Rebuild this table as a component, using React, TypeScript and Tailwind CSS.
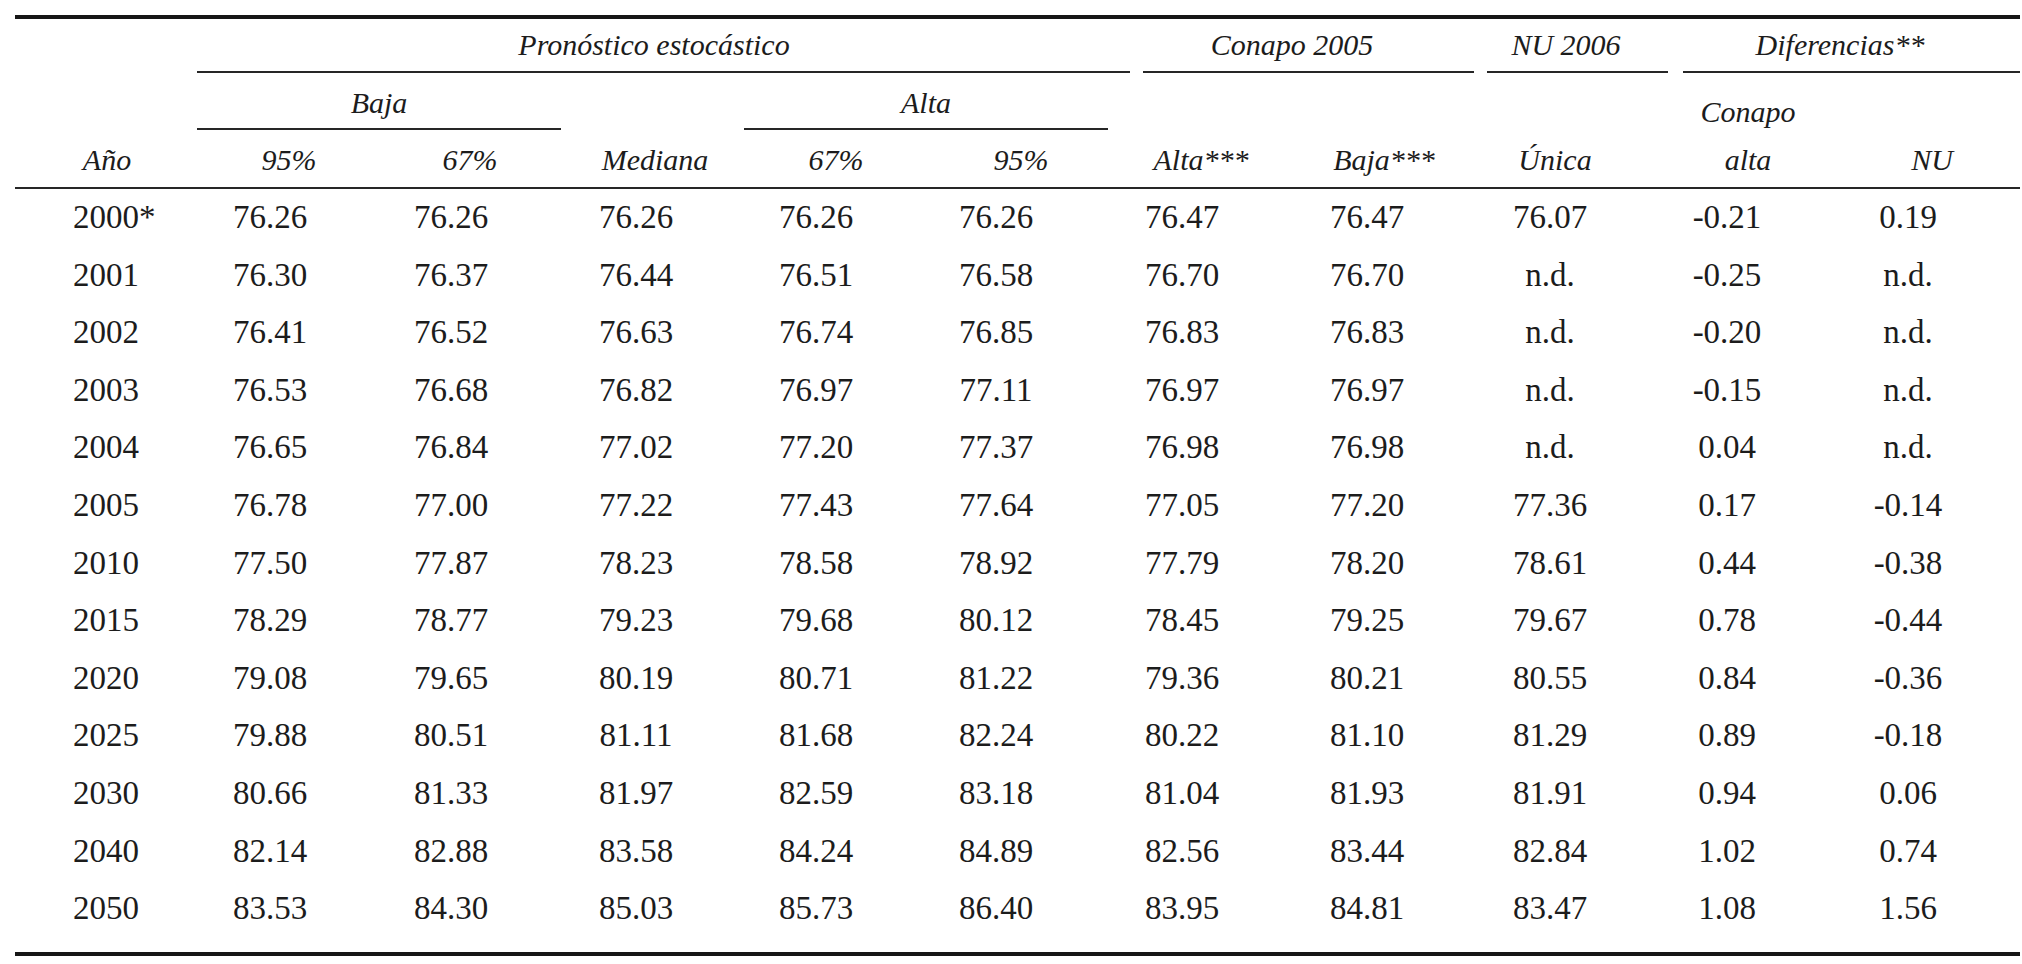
const rows: string[][] = [
  ["2000*", "76.26", "76.26", "76.26", "76.26", "76.26", "76.47", "76.47", "76.07", "-0.21", "0.19"],
  ["2001", "76.30", "76.37", "76.44", "76.51", "76.58", "76.70", "76.70", "n.d.", "-0.25", "n.d."],
  ["2002", "76.41", "76.52", "76.63", "76.74", "76.85", "76.83", "76.83", "n.d.", "-0.20", "n.d."],
  ["2003", "76.53", "76.68", "76.82", "76.97", "77.11", "76.97", "76.97", "n.d.", "-0.15", "n.d."],
  ["2004", "76.65", "76.84", "77.02", "77.20", "77.37", "76.98", "76.98", "n.d.", "0.04", "n.d."],
  ["2005", "76.78", "77.00", "77.22", "77.43", "77.64", "77.05", "77.20", "77.36", "0.17", "-0.14"],
  ["2010", "77.50", "77.87", "78.23", "78.58", "78.92", "77.79", "78.20", "78.61", "0.44", "-0.38"],
  ["2015", "78.29", "78.77", "79.23", "79.68", "80.12", "78.45", "79.25", "79.67", "0.78", "-0.44"],
  ["2020", "79.08", "79.65", "80.19", "80.71", "81.22", "79.36", "80.21", "80.55", "0.84", "-0.36"],
  ["2025", "79.88", "80.51", "81.11", "81.68", "82.24", "80.22", "81.10", "81.29", "0.89", "-0.18"],
  ["2030", "80.66", "81.33", "81.97", "82.59", "83.18", "81.04", "81.93", "81.91", "0.94", "0.06"],
  ["2040", "82.14", "82.88", "83.58", "84.24", "84.89", "82.56", "83.44", "82.84", "1.02", "0.74"],
  ["2050", "83.53", "84.30", "85.03", "85.73", "86.40", "83.95", "84.81", "83.47", "1.08", "1.56"],
];

// column labels of the last header row, with the shift each one needs
const heads = [
  { label: "Año", pad: "pl-[19px]" },
  { label: "95%", pad: "pl-[38px]" },
  { label: "67%", pad: "pl-[38px]" },
  { label: "Mediana", pad: "pl-[38px]" },
  { label: "67%", pad: "pl-[40px]" },
  { label: "95%", pad: "pl-[50px]" },
  { label: "Alta***", pad: "pl-[38px]" },
  { label: "Baja***", pad: "pl-[34px]" },
  { label: "Única", pad: "pl-[10px]" },
  { label: "alta", pad: "pl-[42px]" },
  { label: "NU", pad: "pl-[30px]" },
];

const cols =
  "grid grid-cols-[165px_180px_182px_188px_172px_188px_184px_186px_180px_174px_1fr]";

const dataCell = (i: number) => {
  if (i === 0) return "text-left pl-[58px]";
  if (i === 10) return "text-center pr-[18px]";
  return "text-center";
};

export default function App() {
  return (
    <div className="min-h-[964px] w-[2022px] bg-white font-serif text-[#1c1c1c]">
      <div className="ml-[15px] mr-[2px] pt-[15px] [font-family:Liberation_Serif]">
        <div className="h-[4px] bg-[#161616]" />

        {/* group headings */}
        <div className="flex text-[30px] italic leading-[30px]">
          <div className="w-[182px]" />
          <div className="w-[933px] border-b-2 border-[#262626] pt-[11px] pb-[11px] pr-[19px] text-center">
            Pronóstico estocástico
          </div>
          <div className="ml-[13px] w-[331px] border-b-2 border-[#262626] pt-[11px] pb-[11px] pr-[33px] text-center">
            Conapo 2005
          </div>
          <div className="ml-[13px] w-[181px] border-b-2 border-[#262626] pt-[11px] pb-[11px] pr-[23px] text-center">
            NU 2006
          </div>
          <div className="ml-[15px] flex-1 border-b-2 border-[#262626] pt-[11px] pb-[11px] pr-[23px] text-center">
            Diferencias**
          </div>
        </div>

        {/* sub headings */}
        <div className="flex items-start text-[30px] italic leading-[30px]">
          <div className="ml-[182px] w-[364px] border-b-2 border-[#262626] pt-[15px] pb-[10px] text-center">
            Baja
          </div>
          <div className="ml-[183px] w-[364px] border-b-2 border-[#262626] pt-[15px] pb-[10px] text-center">
            Alta
          </div>
          <div className="ml-[532px] w-[174px] pt-[24px] pl-[42px] text-center">
            Conapo
          </div>
        </div>

        <div className={`${cols} border-b-2 border-[#262626] text-[30px] italic leading-[30px]`}>
          {heads.map((h, i) => (
            <div key={i} className={`pt-[15px] pb-[12px] text-center ${h.pad}`}>
              {h.label}
            </div>
          ))}
        </div>

        <div className="pb-[14px] text-[33px]">
          {rows.map((r, ri) => (
            <div key={ri} className={`${cols} h-[57.6px] leading-[57.6px]`}>
              {r.map((v, i) => (
                <div key={i} className={dataCell(i)}>
                  {v}
                </div>
              ))}
            </div>
          ))}
        </div>

        <div className="h-[4px] bg-[#161616]" />
      </div>
    </div>
  );
}
